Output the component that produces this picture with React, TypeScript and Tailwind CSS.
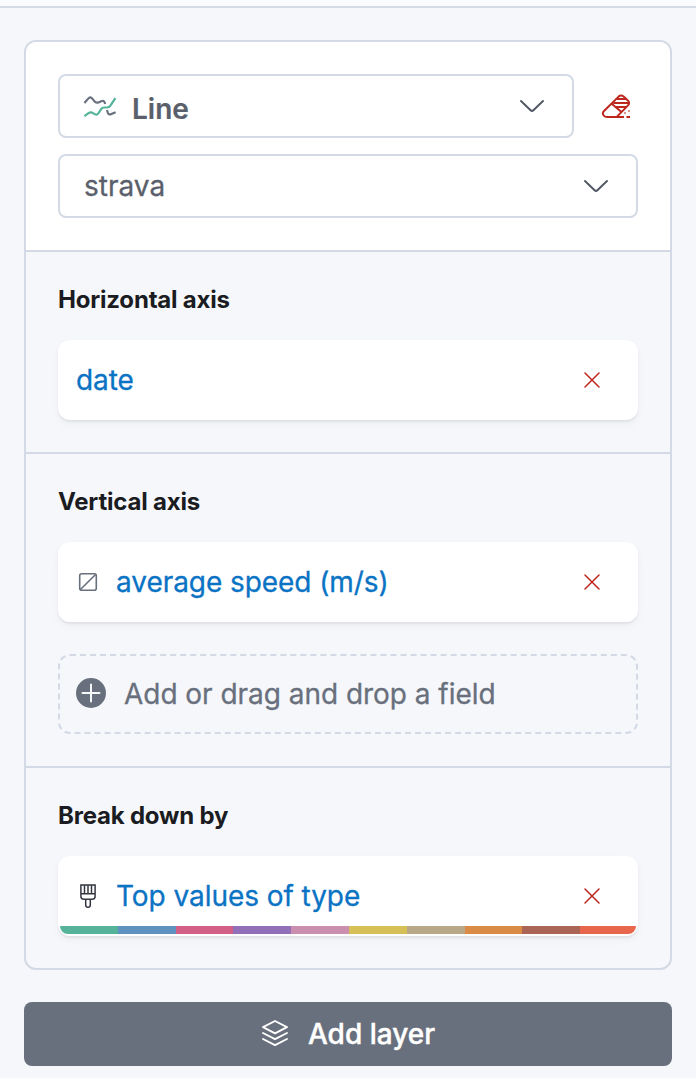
import type { ReactNode } from "react";

const PALETTE = [
  "bg-[#54b399]",
  "bg-[#6092c0]",
  "bg-[#d36086]",
  "bg-[#9170b8]",
  "bg-[#ca8eae]",
  "bg-[#d6bf57]",
  "bg-[#b9a888]",
  "bg-[#da8b45]",
  "bg-[#aa6556]",
  "bg-[#e7664c]",
];

function LineChartIcon() {
  return (
    <svg width="34" height="24" viewBox="0 0 34 24" fill="none" strokeWidth="2.2" strokeLinejoin="round" className="shrink-0">
      <path d="M1.4 9 5.2 4.6C6.6 2.9 8 2.9 9.3 4.6L11.3 7.2C12.6 8.9 13.6 9.2 15.5 8.4L18.2 7.2C20.6 6.2 21.3 6.8 22.2 10" stroke="#69707d" />
      <path d="M24 16 24.7 18.3C25.4 20.4 26.4 20.9 28.4 20L32.6 18.2" stroke="#69707d" />
      <path d="M1.4 22.2 5.5 19.2C7.4 17.9 8.2 17.9 10 19.1L11.2 19.9C13.3 21.2 14.8 20.5 16 18.5L17.9 15.4C18.8 14 19.8 13.5 21.5 13.5H24C26 13.5 26.8 12.9 27.7 11.2L32.4 4.2" stroke="#54b399" />
    </svg>
  );
}

function Chevron() {
  return (
    <svg width="26" height="14" viewBox="0 0 26 14" fill="none" stroke="#535966" strokeWidth="2" strokeLinecap="round" strokeLinejoin="round">
      <path d="M2 2 11.6 11.2Q13 12.5 14.4 11.2L24 2" />
    </svg>
  );
}

function EraserIcon() {
  return (
    <svg width="30" height="26" viewBox="0 0 30 26" fill="none" stroke="#bd271e" strokeWidth="2">
      <path d="M22 24H6C2.4 24 .6 20.4 3 18L17.6 3.6Q20 1.4 22.6 3.6L26.8 7.4Q29.4 10 26.8 12.6L16 23.6" />
      <path d="M10.4 10.6 20.8 19.3M16 6H26M12.3 10H28.2M14.5 14H25.5" />
      <path d="M22 24H23M25.5 24H29" />
      <path d="M23 20H25M27 18H29" opacity=".5" />
    </svg>
  );
}

function RemoveIcon() {
  return (
    <svg width="16" height="16" viewBox="0 0 16 16" fill="none" stroke="#bd271e" strokeWidth="1.5" strokeLinecap="round">
      <path d="M1 1 15 15M15 1 1 15" />
    </svg>
  );
}

function NoColorIcon() {
  return (
    <svg width="20" height="20" viewBox="0 0 20 20" fill="none" stroke="#69707d" strokeWidth="1.6" className="shrink-0">
      <rect x="1.7" y="1.7" width="16.6" height="16.6" rx="2" />
      <path d="M2.2 17.8 17.8 2.2" />
    </svg>
  );
}

function BrushIcon() {
  return (
    <svg width="20" height="26" viewBox="0 0 20 26" fill="none" stroke="#343741" strokeWidth="1.5" className="shrink-0">
      <path d="M2.9 1.9H17.1V13.2Q17.1 16.2 14.1 16.2H5.9Q2.9 16.2 2.9 13.2ZM2.9 10.7H17.1M6.5 1.7V10.6M10 1.7V10.6M13.5 1.7V10.6" />
      <path d="M7.7 16.3V22Q7.7 24.3 10 24.3T12.3 22V16.3" />
    </svg>
  );
}

function LayersIcon() {
  return (
    <svg width="28" height="28" viewBox="0 0 28 28" fill="none" stroke="#fff" strokeWidth="1.9" strokeLinecap="round" strokeLinejoin="round">
      <path d="M14 2 26 8.2 14 14.4 2 8.2ZM2 14 14 20.2 26 14M2 20 14 26.2 26 20" />
    </svg>
  );
}

function Section({ title, children }: { title: string; children: ReactNode }) {
  return (
    <section className="border-t-2 border-[#d3dae6] px-8 pt-8 pb-8">
      <h3 className="mb-6 h-8 text-[24px] leading-8 font-[650] tracking-[-0.2px] text-[#1a1c21]">{title}</h3>
      {children}
    </section>
  );
}

function Dimension({ icon, label, palette }: { icon?: ReactNode; label: string; palette?: boolean }) {
  return (
    <div className="relative flex h-20 items-center rounded-xl bg-white pr-[38px] pl-[18px] shadow-[0_2px_2px_rgba(0,0,0,0.06),0_4px_8px_rgba(0,0,0,0.04)]">
      {icon && <span className="mr-[16px] flex w-6 justify-center">{icon}</span>}
      <span className="flex-1 text-[28px] leading-10 tracking-[-0.06px] text-[#0b73c4] [-webkit-text-stroke:0.3px]">{label}</span>
      <button aria-label="Remove"><RemoveIcon /></button>
      {palette && (
        <div className="absolute inset-x-0.5 bottom-0.5 h-2 overflow-hidden rounded-b-[10px]">
          <div className="flex h-2 w-[578px]">
            {PALETTE.map((color) => (
              <span key={color} className={`flex-1 ${color}`} />
            ))}
          </div>
        </div>
      )}
    </div>
  );
}

export default function App() {
  return (
    <main className="h-[1078px] w-[696px] overflow-hidden bg-[#f5f7fb] font-[Inter,sans-serif]">
      <div className="h-2 border-b-2 border-[#d3dae6] bg-[#fafbfd]" />
      <div className="px-6 pt-8">
        <div className="overflow-hidden rounded-xl border-2 border-[#d3dae6]">
          <div className="flex h-[208px] flex-col gap-4 bg-white px-8 pt-8">
            <div className="flex items-center justify-between">
              <button className="flex h-16 w-[516px] items-center rounded-lg border-2 border-[#d3dae6] pr-[27px] pl-[23px]">
                <LineChartIcon />
                <span className="ml-[15px] flex-1 pt-1.5 text-left text-[28px] leading-9 font-semibold text-[#5a606b] [-webkit-text-stroke:0.2px]">Line</span>
                <Chevron />
              </button>
              <button aria-label="Clear layer" className="mr-[7px]"><EraserIcon /></button>
            </div>
            <button className="flex h-16 items-center rounded-lg border-2 border-[#d3dae6] pr-[27px] pl-6">
              <span className="flex-1 text-left text-[28px] leading-9 text-[#5a606b] [-webkit-text-stroke:0.3px]">strava</span>
              <Chevron />
            </button>
          </div>
          <Section title="Horizontal axis">
            <Dimension label="date" />
          </Section>
          <Section title="Vertical axis">
            <Dimension icon={<NoColorIcon />} label="average speed (m/s)" />
            <button className="mt-8 flex h-20 w-full items-center rounded-xl border-2 border-dashed border-[#d3dae6] pl-4">
              <svg width="30" height="32" viewBox="0 0 30 32" className="shrink-0">
                <circle cx="15" cy="15" r="15" fill="#69707d" />
                <path d="M6.5 15H23.5M15 6.5V23.5" stroke="#f5f7fb" strokeWidth="2" strokeLinecap="round" />
              </svg>
              <span className="ml-[18px] text-[28px] leading-10 tracking-[-0.03px] text-[#69707d] [-webkit-text-stroke:0.3px]">Add or drag and drop a field</span>
            </button>
          </Section>
          <Section title="Break down by">
            <Dimension icon={<BrushIcon />} label="Top values of type" palette />
          </Section>
        </div>
        <button className="mt-8 flex h-16 w-full items-center justify-center gap-[19px] rounded-lg bg-[#69707d] text-[28px] font-medium text-white [-webkit-text-stroke:0.4px]">
          <span className="pb-0.5"><LayersIcon /></span>
          <span>Add layer</span>
        </button>
      </div>
    </main>
  );
}
